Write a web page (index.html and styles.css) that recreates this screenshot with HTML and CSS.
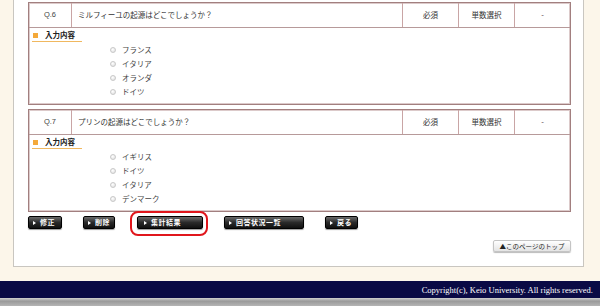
FILE: index.html
```html
<!DOCTYPE html>
<html lang="ja">
<head>
<meta charset="utf-8">
<link rel="stylesheet" href="styles.css">
</head>
<body>
<div class="page">
  <div class="panel">
    <div class="q">
      <div class="q-head">
        <div class="c c-no">Q.6</div>
        <div class="c c-text">ミルフィーユの起源はどこでしょうか？</div>
        <div class="c c-mid">必須</div>
        <div class="c c-mid">単数選択</div>
        <div class="c c-mid">-</div>
      </div>
      <div class="q-body">
        <div class="label"><span class="sq"></span>入力内容</div>
        <ul class="opts">
          <li><span class="radio"></span>フランス</li>
          <li><span class="radio"></span>イタリア</li>
          <li><span class="radio"></span>オランダ</li>
          <li><span class="radio"></span>ドイツ</li>
        </ul>
      </div>
    </div>
    <div class="q">
      <div class="q-head">
        <div class="c c-no">Q.7</div>
        <div class="c c-text">プリンの起源はどこでしょうか？</div>
        <div class="c c-mid">必須</div>
        <div class="c c-mid">単数選択</div>
        <div class="c c-mid">-</div>
      </div>
      <div class="q-body">
        <div class="label"><span class="sq"></span>入力内容</div>
        <ul class="opts">
          <li><span class="radio"></span>イギリス</li>
          <li><span class="radio"></span>ドイツ</li>
          <li><span class="radio"></span>イタリア</li>
          <li><span class="radio"></span>デンマーク</li>
        </ul>
      </div>
    </div>
    <div class="btns">
      <span class="btn w34">修正</span>
      <span class="btn w32">削除</span>
      <span class="btn w66 hl">集計結果</span>
      <span class="btn w80">回答状況一覧</span>
      <span class="btn w33">戻る</span>
    </div>
    <div class="toprow"><span class="topbtn">▲このページのトップ</span></div>
  </div>
</div>
<div class="footer">Copyright(c), Keio University. All rights reserved.</div>
<div class="bar"></div>
</body>
</html>
```
FILE: styles.css
```css
* { box-sizing: border-box; }
html, body { margin: 0; padding: 0; }
body {
  width: 600px;
  height: 306px;
  overflow: hidden;
  background: #fcf6ea;
  font-family: "Noto Sans CJK JP", "Noto Sans", sans-serif;
  color: #333;
  line-height: 1;
}
.page { padding: 0 16px 14px 13px; }
.panel {
  background: #fff;
  border: 1px solid #c9c6c0;
  border-top: none;
  height: 267px;
  padding: 2px 12px 0 14px;
}
.q {
  border: 1px solid #a27f7f;
  box-shadow: inset 0 0 0 1px #dccaca;
  margin-bottom: 4px;
}
.q-head {
  display: grid;
  grid-template-columns: 42px 331px 56px 56px 1fr;
  height: 25px;
  border-bottom: 1px solid #b79a9a;
}
.c {
  display: flex;
  align-items: center;
  font-size: 7.5px;
  color: #333;
  border-left: 1px solid #c9a5a5;
}
.c:first-child { border-left: none; }
.c-no { justify-content: center; font-family: "Liberation Sans", sans-serif; font-size: 7.5px; color: #444; }
.c-text { padding-left: 6px; }
.c-mid { justify-content: center; }
.q-body { padding: 2px 0 5px 3px; }
.label {
  display: flex;
  align-items: center;
  font-size: 7.5px;
  font-weight: bold;
  color: #222;
  border-bottom: 1px solid #f0b860;
  padding: 0 2px 1px 1px;
  height: 12px;
  width: 50px;
}
.sq {
  width: 5px;
  height: 5px;
  background: #f4a93a;
  margin-right: 7px;
}
.opts {
  list-style: none;
  margin: 1px 0 0 78px;
  padding: 0;
}
.opts li {
  display: flex;
  align-items: center;
  height: 14px;
  font-size: 7.5px;
  color: #444;
}
.radio {
  width: 6px;
  height: 6px;
  border-radius: 50%;
  border: 1px solid #c8c8c8;
  background: radial-gradient(circle at 40% 35%, #ffffff, #dcdcdc);
  margin-right: 6px;
}
.btns {
  display: flex;
  gap: 21px;
  margin-top: 1px;
}
.btn {
  position: relative;
  height: 13px;
  border-radius: 2px;
  background: linear-gradient(#6a6a6a, #2a2a2a 50%, #111);
  border: 1px solid #000;
  box-shadow: 0 1px 1px #999;
  color: #fff;
  font-size: 7px;
  font-weight: bold;
  display: flex;
  align-items: center;
  padding-left: 4px;
  letter-spacing: 0.5px;
}
.btn::before {
  content: "";
  border-left: 3px solid #fff;
  border-top: 2px solid transparent;
  border-bottom: 2px solid transparent;
  margin-right: 4px;
}
.w34 { width: 34px; }
.w32 { width: 32px; }
.w66 { width: 66px; }
.w80 { width: 80px; }
.w33 { width: 33px; }
.hl { margin-left: 1px; }
.hl::after {
  content: "";
  position: absolute;
  left: -8px;
  top: -6px;
  right: -6px;
  bottom: -8px;
  border: 2px solid #e0161c;
  border-radius: 8px;
}
.btn.hl { padding-left: 6px; }
.toprow {
  display: flex;
  justify-content: flex-end;
  margin-top: 11px;
}
.topbtn {
  width: 78px;
  height: 12px;
  border: 1px solid #c4c4c4;
  border-radius: 2px;
  background: linear-gradient(#ffffff, #e4e4e4);
  box-shadow: 0 1px 1px #bbb;
  font-size: 6.5px;
  color: #222;
  display: flex;
  align-items: center;
  justify-content: center;
}
.footer {
  height: 17px;
  background: #0a0a45;
  color: #fff;
  font-family: "Liberation Serif", serif;
  font-size: 8.5px;
  text-align: right;
  padding: 4px 7px 0 0;
  line-height: 10px;
}
.bar {
  height: 8px;
  background: linear-gradient(#d0d0d0, #9a9a9a 40%, #b5b5b5);
}
```
